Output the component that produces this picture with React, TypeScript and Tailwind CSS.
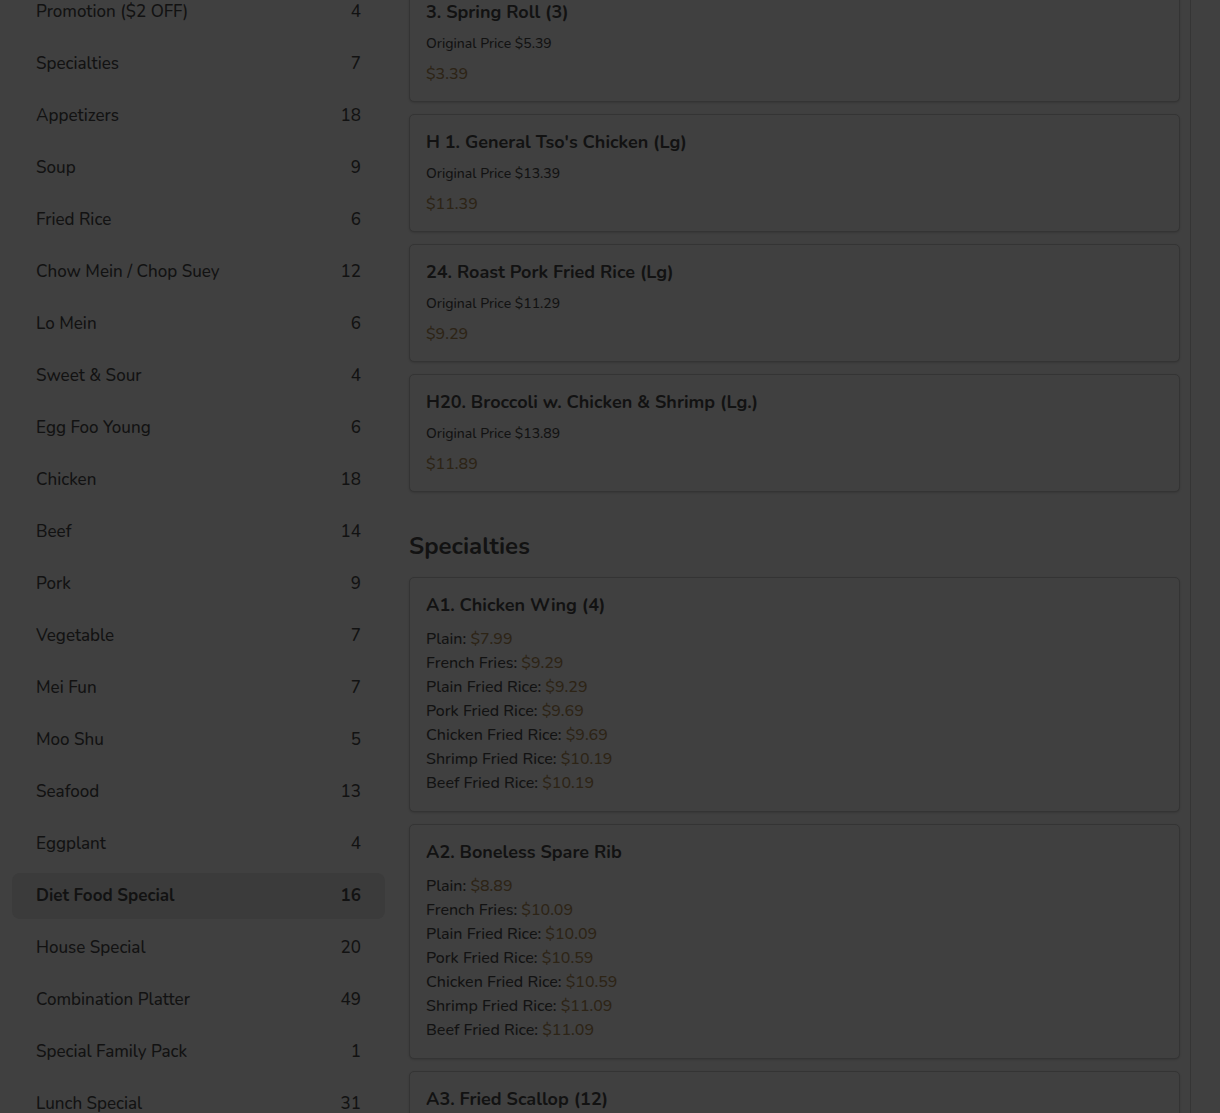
const categories: [string, number][] = [
  ["Promotion ($2 OFF)", 4],
  ["Specialties", 7],
  ["Appetizers", 18],
  ["Soup", 9],
  ["Fried Rice", 6],
  ["Chow Mein / Chop Suey", 12],
  ["Lo Mein", 6],
  ["Sweet & Sour", 4],
  ["Egg Foo Young", 6],
  ["Chicken", 18],
  ["Beef", 14],
  ["Pork", 9],
  ["Vegetable", 7],
  ["Mei Fun", 7],
  ["Moo Shu", 5],
  ["Seafood", 13],
  ["Eggplant", 4],
  ["Diet Food Special", 16],
  ["House Special", 20],
  ["Combination Platter", 49],
  ["Special Family Pack", 1],
  ["Lunch Special", 31],
];

const promos = [
  { name: "3. Spring Roll (3)", orig: "$5.39", price: "$3.39" },
  { name: "H 1. General Tso's Chicken (Lg)", orig: "$13.39", price: "$11.39" },
  { name: "24. Roast Pork Fried Rice (Lg)", orig: "$11.29", price: "$9.29" },
  { name: "H20. Broccoli w. Chicken & Shrimp (Lg.)", orig: "$13.89", price: "$11.89" },
];

const specialties: { name: string; options: [string, string][] }[] = [
  {
    name: "A1. Chicken Wing (4)",
    options: [
      ["Plain", "$7.99"],
      ["French Fries", "$9.29"],
      ["Plain Fried Rice", "$9.29"],
      ["Pork Fried Rice", "$9.69"],
      ["Chicken Fried Rice", "$9.69"],
      ["Shrimp Fried Rice", "$10.19"],
      ["Beef Fried Rice", "$10.19"],
    ],
  },
  {
    name: "A2. Boneless Spare Rib",
    options: [
      ["Plain", "$8.89"],
      ["French Fries", "$10.09"],
      ["Plain Fried Rice", "$10.09"],
      ["Pork Fried Rice", "$10.59"],
      ["Chicken Fried Rice", "$10.59"],
      ["Shrimp Fried Rice", "$11.09"],
      ["Beef Fried Rice", "$11.09"],
    ],
  },
  {
    name: "A3. Fried Scallop (12)",
    options: [
      ["Plain", "$8.89"],
      ["French Fries", "$10.09"],
    ],
  },
];

function Card({ children }: { children: React.ReactNode }) {
  return (
    <div className="rounded-[5px] border border-[#343434] bg-[#404040] px-4 pt-[15px] pb-[15px] shadow-[0_1px_2px_rgba(0,0,0,0.15)]">
      {children}
    </div>
  );
}

export default function App() {
  return (
    <div
      className="h-[1113px] overflow-hidden bg-[#404040] text-[#121212]"
      style={{ fontFamily: "Nunito, 'Noto Sans', sans-serif" }}
    >
      <div className="flex w-[1191px] border-r border-[#353535] h-full">
        {/* category sidebar */}
        <div className="ml-3 mt-[-11px] w-[373px] shrink-0">
          {categories.map(([name, count]) => {
            const active = name === "Diet Food Special";
            return (
              <div
                key={name}
                className={
                  "mb-[6px] flex h-[46px] items-center justify-between rounded-lg px-6 text-[17px] " +
                  (active ? "bg-[#3b3b3b] font-bold" : "font-medium")
                }
              >
                <span>{name}</span>
                <span>{count}</span>
              </div>
            );
          })}
        </div>

        {/* menu */}
        <div className="ml-6 mt-[-16px] w-[771px] shrink-0">
          <div className="flex flex-col gap-3">
            {promos.map((p) => (
              <Card key={p.name}>
                <div className="text-[18px] font-bold leading-6">{p.name}</div>
                <div className="mt-[10px] text-[14px] font-medium leading-5">Original Price {p.orig}</div>
                <div className="mt-2 text-[16px] font-medium leading-6 text-[#2d2416]">{p.price}</div>
              </Card>
            ))}
          </div>

          <h2 className="mt-[38px] mb-[15px] text-[24px] font-bold leading-[32px]">Specialties</h2>

          <div className="flex flex-col gap-3">
            {specialties.map((s) => (
              <Card key={s.name}>
                <div className="text-[18px] font-bold leading-6">{s.name}</div>
                <div className="mt-[10px] mb-px">
                  {s.options.map(([label, price]) => (
                    <div key={label} className="text-[16px] font-medium leading-6">
                      {label}: <span className="text-[#2d2416]">{price}</span>
                    </div>
                  ))}
                </div>
              </Card>
            ))}
          </div>
        </div>
      </div>
    </div>
  );
}
